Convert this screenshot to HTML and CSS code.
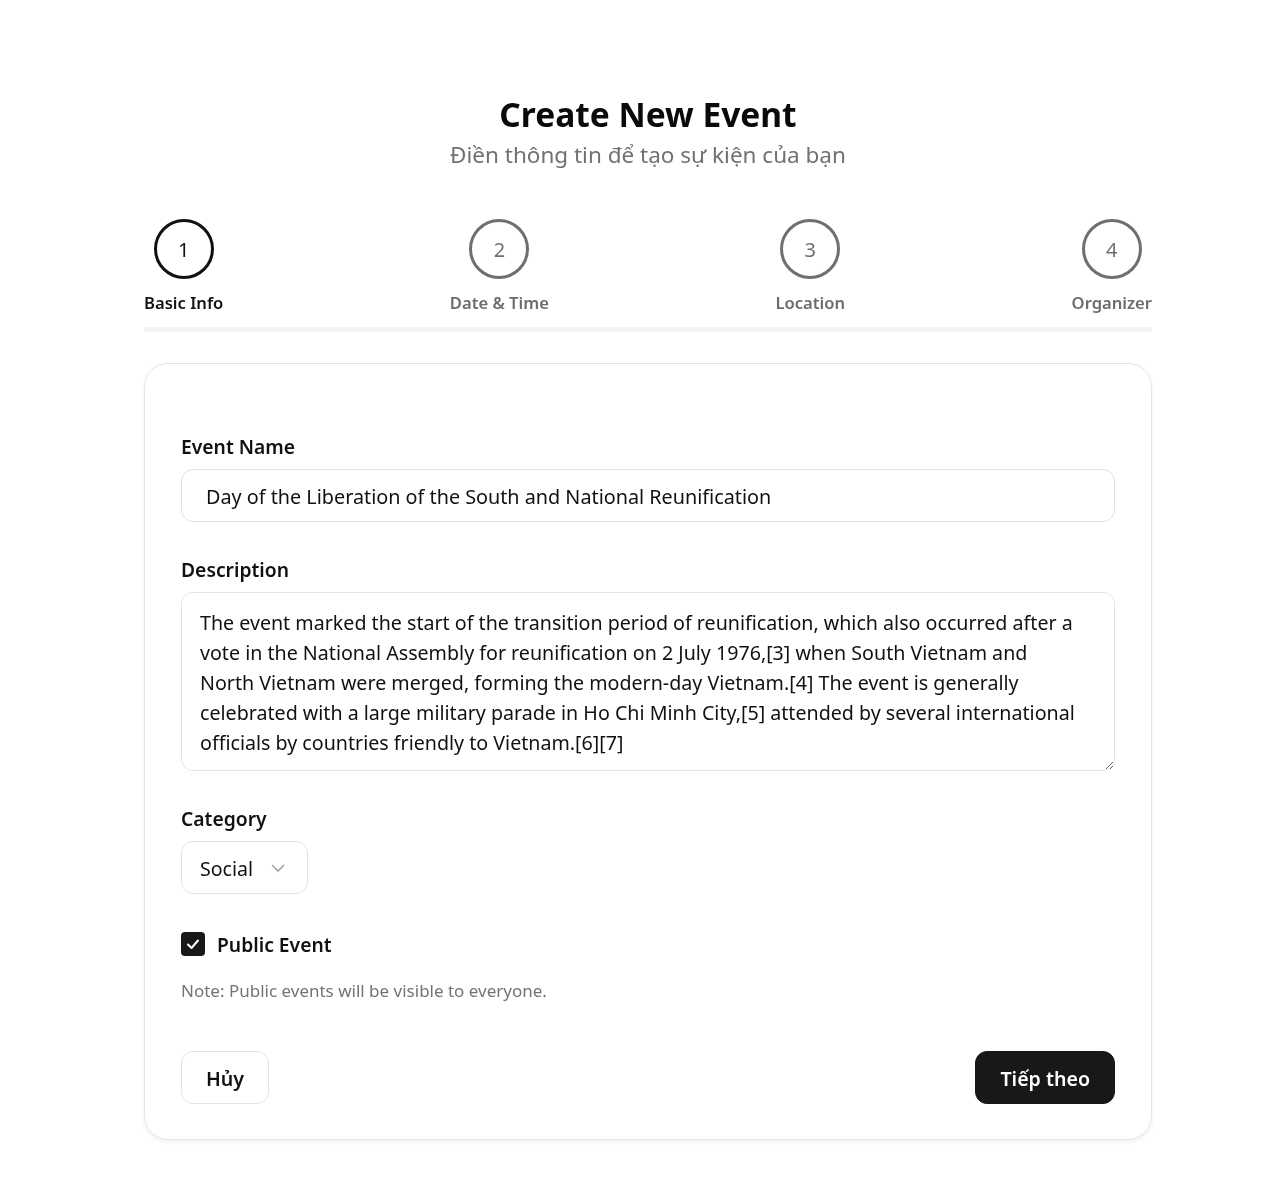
FILE: index.html
```html
<!DOCTYPE html>
<html lang="vi">
<head>
<meta charset="utf-8">
<title>Create New Event</title>
<link rel="stylesheet" href="styles.css">
</head>
<body>
<div class="page">
  <header class="header">
    <h1 class="title">Create New Event</h1>
    <p class="subtitle">Điền thông tin để tạo sự kiện của bạn</p>
  </header>

  <div class="stepper">
    <div class="step active"><div class="circle">1</div><div class="step-label">Basic Info</div></div>
    <div class="step"><div class="circle">2</div><div class="step-label">Date &amp; Time</div></div>
    <div class="step"><div class="circle">3</div><div class="step-label">Location</div></div>
    <div class="step"><div class="circle">4</div><div class="step-label">Organizer</div></div>
  </div>
  <div class="progress"></div>

  <form class="card">
    <div class="group">
      <label class="label">Event Name</label>
      <input class="input" type="text" value="Day of the Liberation of the South and National Reunification">
    </div>
    <div class="group">
      <label class="label">Description</label>
      <textarea class="textarea">The event marked the start of the transition period of reunification, which also occurred after a vote in the National Assembly for reunification on 2 July 1976,[3] when South Vietnam and North Vietnam were merged, forming the modern-day Vietnam.[4] The event is generally celebrated with a large military parade in Ho Chi Minh City,[5] attended by several international officials by countries friendly to Vietnam.[6][7]</textarea>
    </div>
    <div class="group">
      <label class="label">Category</label>
      <div class="select">
        <span>Social</span>
        <svg class="chev" width="14" height="9" viewBox="0 0 14 9"><polyline points="1,1 7,7 13,1" fill="none" stroke="#a3a3a8" stroke-width="1.6"/></svg>
      </div>
    </div>
    <div class="check-row">
      <span class="checkbox"><svg width="16" height="16" viewBox="0 0 16 16"><polyline points="3,8.5 6.5,12 13,4.5" fill="none" stroke="#fff" stroke-width="2" stroke-linecap="round" stroke-linejoin="round"/></svg></span>
      <span class="check-label">Public Event</span>
    </div>
    <p class="note">Note: Public events will be visible to everyone.</p>
    <div class="actions">
      <button type="button" class="btn btn-outline">Hủy</button>
      <button type="button" class="btn btn-dark">Tiếp theo</button>
    </div>
  </form>
</div>
</body>
</html>
```

FILE: styles.css
```css
* { box-sizing: border-box; }
body {
  margin: 0;
  background: #fff;
  font-family: "Noto Sans", "Open Sans", sans-serif;
  color: #111;
}
.page {
  width: 1008px;
  margin-left: 144px;
  padding-top: 93px;
  padding-bottom: 37px;
}
.header { text-align: center; }
.title {
  margin: 0;
  font-size: 33.5px;
  line-height: 42px;
  font-weight: 700;
  color: #0a0a0a;
}
.subtitle {
  margin: 5px 0 0;
  font-size: 22.5px;
  line-height: 30px;
  color: #707078;
}
.stepper {
  margin-top: 49px;
  display: flex;
  justify-content: space-between;
}
.step {
  display: flex;
  flex-direction: column;
  align-items: center;
}
.circle {
  width: 60px;
  height: 60px;
  border: 3px solid #6e6e76;
  border-radius: 50%;
  display: flex;
  align-items: center;
  justify-content: center;
  font-size: 20px;
  color: #6e6e76;
}
.step-label {
  margin-top: 12px;
  font-size: 16.6px;
  line-height: 24px;
  font-weight: 600;
  color: #6b6b73;
}
.step.active .circle { border-color: #111; color: #111; }
.step.active .step-label { color: #111; }
.progress {
  margin-top: 12px;
  height: 5px;
  background: #f3f3f4;
}
.card {
  margin: 31px 0 0;
  border: 1px solid #e4e4e6;
  border-radius: 24px;
  box-shadow: 0 2px 4px rgba(0,0,0,0.06);
  padding: 69px 36px 35px;
}
.group { margin-bottom: 34px; }
.label {
  display: block;
  font-size: 19.3px;
  line-height: 28px;
  font-weight: 600;
  margin-bottom: 8px;
}
.input {
  display: block;
  width: 100%;
  height: 53px;
  border: 1px solid #e2e2e4;
  border-radius: 12px;
  padding: 1px 24px 0;
  font-family: inherit;
  font-size: 19.8px;
  color: #111;
  background: #fff;
  outline: none;
}
.textarea {
  display: block;
  width: 100%;
  height: 179px;
  border: 1px solid #e2e2e4;
  border-radius: 12px;
  padding: 15px 28px 14px 18px;
  font-family: inherit;
  font-size: 19.65px;
  line-height: 30px;
  color: #111;
  background: #fff;
  resize: vertical;
  outline: none;
}
.select {
  width: 127px;
  height: 53px;
  border: 1px solid #e2e2e4;
  border-radius: 12px;
  display: flex;
  align-items: center;
  padding: 1px 18px 0;
  font-size: 19.6px;
  gap: 18px;
}
.check-row {
  display: flex;
  align-items: center;
  gap: 12px;
  margin-top: 36px;
  height: 28px;
}
.checkbox {
  width: 24px;
  height: 24px;
  border-radius: 4px;
  background: #18181b;
  display: flex;
  align-items: center;
  justify-content: center;
}
.check-label {
  font-size: 19.3px;
  font-weight: 600;
}
.note {
  margin: 21px 0 0;
  font-size: 17px;
  line-height: 24px;
  color: #737378;
}
.actions {
  margin-top: 48px;
  display: flex;
  justify-content: space-between;
}
.btn {
  height: 53px;
  border-radius: 12px;
  font-family: inherit;
  font-size: 19.6px;
  font-weight: 600;
  padding: 1px 24px 0;
  cursor: pointer;
}
.btn-outline {
  background: #fff;
  border: 1px solid #e2e2e4;
  color: #111;
}
.btn-dark {
  background: #18181b;
  border: 1px solid #18181b;
  color: #fff;
}
```
